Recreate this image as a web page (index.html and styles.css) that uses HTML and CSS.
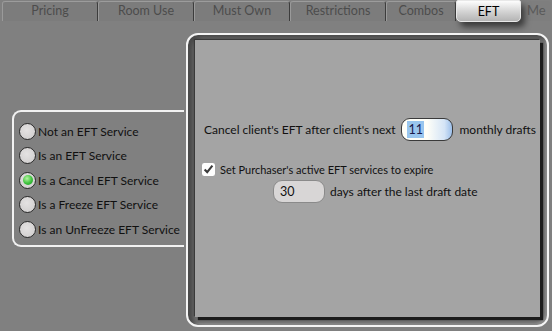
FILE: index.html
```html
<!DOCTYPE html>
<html lang="en">
<head>
    <meta charset="UTF-8">
    <title>Service Settings - EFT</title>
    <link rel="stylesheet" href="styles.css">
</head>
<body>
    <div class="tabs">
        <div class="tab tab-wide first">Pricing</div>
        <div class="tab tab-wide">Room Use</div>
        <div class="tab tab-wide">Must Own</div>
        <div class="tab tab-wide">Restrictions</div>
        <div class="tab tab-combos">Combos</div>
        <div class="tab tab-active">EFT</div>
        <div class="tab tab-more">Me</div>
    </div>

    <div class="content">
        <div class="service-type">
            <label class="radio"><input type="radio" name="eftType"><span>Not an EFT Service</span></label>
            <label class="radio"><input type="radio" name="eftType"><span>Is an EFT Service</span></label>
            <label class="radio"><input type="radio" name="eftType" checked><span>Is a Cancel EFT Service</span></label>
            <label class="radio"><input type="radio" name="eftType"><span>Is a Freeze EFT Service</span></label>
            <label class="radio"><input type="radio" name="eftType"><span>Is an UnFreeze EFT Service</span></label>
        </div>

        <div class="panel">
            <div class="panel-inner">
                <div class="row row-cancel">
                    <span>Cancel client's EFT after client's next</span>
                    <div class="field field-blue"><span class="selected">11</span></div>
                    <span>monthly drafts</span>
                </div>
                <label class="row row-check">
                    <input type="checkbox" checked>
                    <span>Set Purchaser's active EFT services to expire</span>
                </label>
                <div class="row row-days">
                    <div class="field field-gray">30</div>
                    <span>days after the last draft date</span>
                </div>
            </div>
        </div>
    </div>
</body>
</html>
```

FILE: styles.css
```css
body {
    margin: 0;
    width: 552px;
    height: 331px;
    overflow: hidden;
    background-color: #808080;
    font-family: Lato, "Open Sans", sans-serif;
    font-size: 12px;
    color: #111;
    white-space: nowrap;
}

/* tab strip */
.tabs {
    display: flex;
    height: 21px;
}
.tab {
    flex: none;
    box-sizing: border-box;
    height: 20px;
    margin-top: 1px;
    line-height: 18px;
    text-align: center;
    color: #4c4c4c;
    font-size: 12.5px;
    background-color: #7c7c7c;
    border-top: 1px solid #9c9c9c;
    border-left: 1px solid #9a9a9a;
    border-right: 1px solid #3c3c3c;
    border-radius: 3px 3px 0 0;
}
.tab.first {
    margin-left: 2px;
}
.tab-wide {
    width: 96px;
}
.tab-combos {
    width: 70px;
}
.tab-active {
    position: relative;
    width: 65px;
    height: 22px;
    margin-top: 0;
    line-height: 21px;
    color: #000;
    background: linear-gradient(#fdfdfd, #d2d2d2 55%, #b4b4b4);
    border: 1px solid #e8e8e8;
    border-radius: 2px 2px 5px 5px;
    box-shadow: 4px 5px 6px rgba(0, 0, 0, 0.55);
    z-index: 1;
}
.tab-more {
    width: 24px;
    margin-left: 6px;
    text-align: left;
    border: none;
    background-color: #7e7e7e;
    color: #5a5a5a;
    font-size: 13px;
}

/* content area */
.content {
    display: flex;
    align-items: flex-start;
    padding-top: 12px;
}

.service-type {
    box-sizing: border-box;
    width: 172px;
    height: 137px;
    margin-top: 77px;
    margin-left: 12px;
    margin-right: 2px;
    padding: 10px 0 0 5px;
    border: 2px solid #f2f2f2;
    border-right: none;
    border-radius: 9px 0 0 9px;
    display: flex;
    flex-direction: column;
    gap: 6.5px;
}
.radio {
    display: flex;
    align-items: center;
    gap: 2px;
    height: 18px;
    color: #101010;
}
.radio input {
    appearance: none;
    flex: none;
    margin: 0;
    width: 17px;
    height: 17px;
    border-radius: 50%;
    border: 1px solid #2b2b2b;
    background: radial-gradient(circle at 45% 40%, #e4e2e2, #cdcbcb);
    display: grid;
    place-items: center;
}
.radio input:checked::after {
    content: "";
    width: 10px;
    height: 10px;
    border-radius: 50%;
    background: radial-gradient(circle at 40% 35%, #b6f5a2, #3cc23c 55%, #1f8a24);
}

/* main panel */
.panel {
    box-sizing: border-box;
    width: 363px;
    height: 294px;
    padding: 5px 7px 8px 7px;
    border: 2px solid #f4f4f4;
    border-radius: 12px;
    background-color: #6e6e6e;
    box-shadow: inset 5px 3px 4px #4a4a4a, inset -2px -2px 2px #8a8a8a;
}
.panel-inner {
    height: 100%;
    background-color: #a4a4a4;
    box-shadow: 3px 3px 1px #1c1c1c, -1px -1px 1px #3a3a3a;
    padding: 78px 0 0 9px;
    box-sizing: border-box;
}
.row {
    display: flex;
    align-items: center;
}
.row-cancel {
    height: 23px;
    gap: 6px;
}
.row-check {
    margin-top: 22px;
    margin-left: -2px;
    gap: 5px;
    font-size: 11px;
}
.row-check input {
    margin: 0;
    width: 13px;
    height: 13px;
    accent-color: #fff;
}
.row-days {
    margin-top: 4px;
    margin-left: 69px;
    gap: 5px;
}

.field {
    box-sizing: border-box;
    flex: none;
    width: 52px;
    height: 23px;
    border: 1px solid #3a3a3a;
    border-radius: 9px;
    padding-left: 5px;
    line-height: 21px;
    font-size: 12.5px;
}
.field-blue {
    background: linear-gradient(to right, #fffff8 50%, #d4e4f6 85%, #9cbfea);
}
.field-gray {
    background-color: #d8d6d6;
    border-color: #8a8a8a;
    padding-left: 6px;
}
.selected {
    background-color: #99c6ee;
    padding: 1px 1px;
    color: #1a1a4a;
}
```
